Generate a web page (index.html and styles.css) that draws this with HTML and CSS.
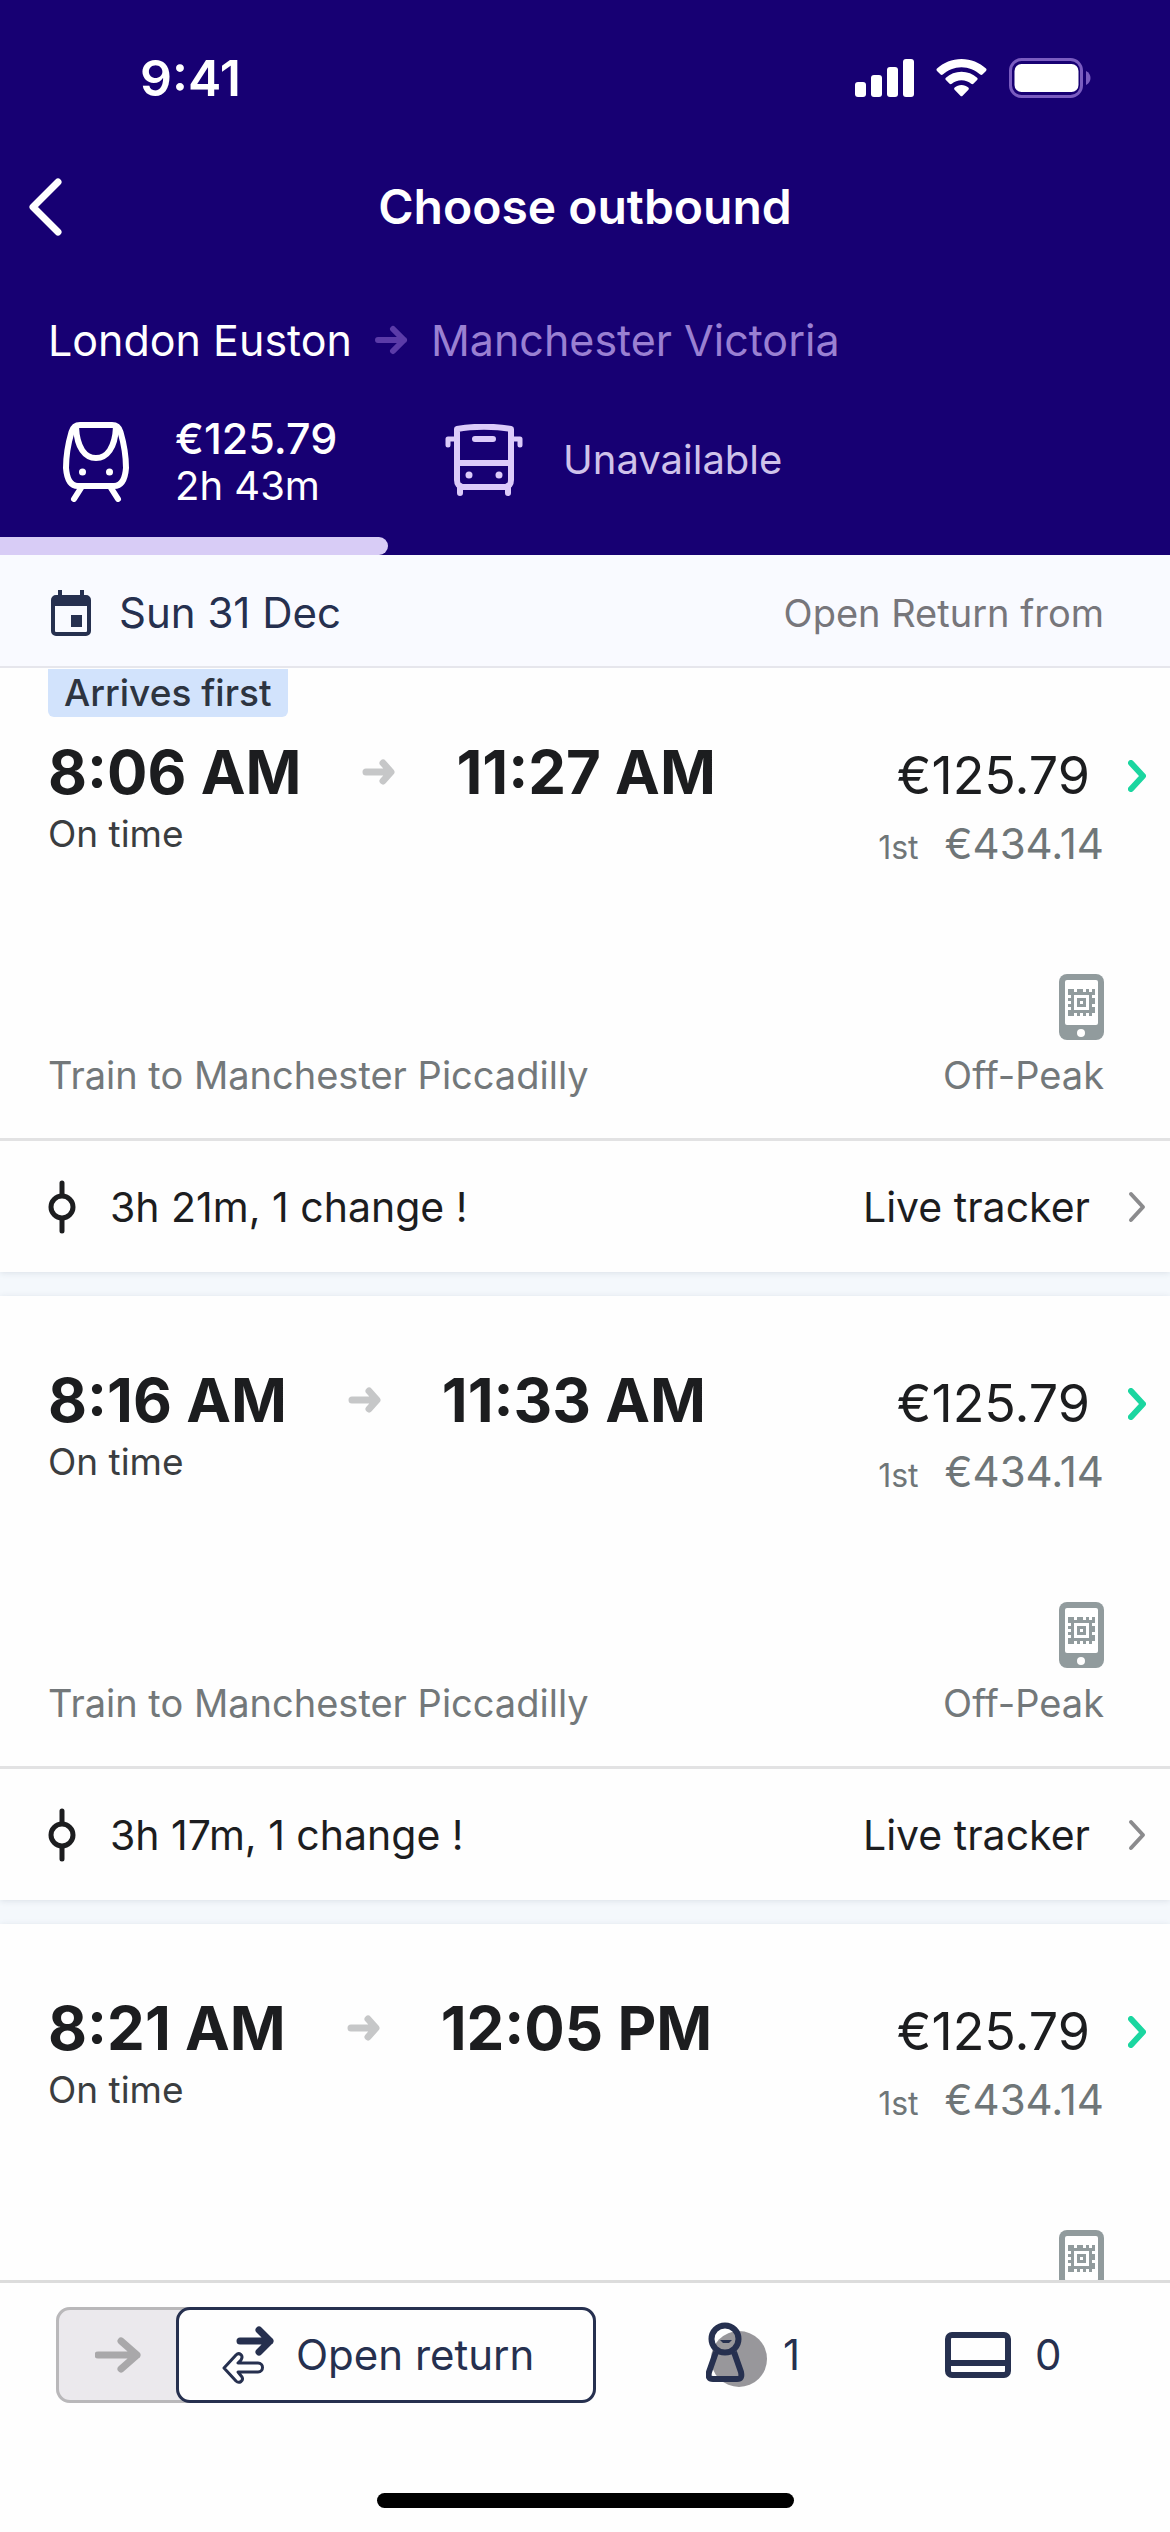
FILE: index.html
```
<!doctype html>
<html lang="en">
<head>
<meta charset="utf-8">
<meta name="viewport" content="width=device-width, initial-scale=1">
<title>Choose outbound</title>
<link rel="stylesheet" href="styles.css">
</head>
<body>

<!-- shared icons -->
<svg class="sprite" aria-hidden="true">
  <symbol id="arrow" viewBox="0 0 33 30">
    <path d="M3 15H29M18 4L29 15L18 26" fill="none" stroke="currentColor" stroke-width="6" stroke-linecap="round" stroke-linejoin="round"/>
  </symbol>
  <symbol id="arrow-bold" viewBox="0 0 33 26">
    <path d="M4 13H28M21 4L29 13L21 22" fill="none" stroke="currentColor" stroke-width="7" stroke-linecap="round" stroke-linejoin="round"/>
  </symbol>
  <symbol id="chevron" viewBox="0 0 18 32">
    <path d="M3 3L15 16L3 29" fill="none" stroke="currentColor" stroke-linecap="round" stroke-linejoin="round"/>
  </symbol>
  <symbol id="mticket" viewBox="0 0 45 66">
    <rect width="45" height="66" rx="8" fill="#919b9d"/>
    <rect x="6" y="6" width="33" height="45" rx="2" fill="#fff"/>
    <circle cx="22" cy="59" r="4" fill="#fff"/>
    <path d="M13.500 19.500h18v18h-18z" fill="none" stroke="#919b9d" stroke-width="3"/>
    <path d="M19.500 25.500h6v6h-6z" fill="none" stroke="#919b9d" stroke-width="3"/>
    <path d="M9 15h6v3h-6zM18 15h6v3h-6zM27 15h3v3h-3zM33 15h3v6h-3zM9 18h3v3h-3zM9 24h3v3h-3zM9 30h3v3h-3zM9 36h3v6h-3zM12 39h3v3h-3zM18 39h3v3h-3zM24 39h3v3h-3zM30 39h3v3h-3zM33 24h3v6h-3zM33 33h3v6h-3z" fill="#919b9d"/>
  </symbol>
  <symbol id="leg" viewBox="0 0 28 54">
    <g fill="none" stroke="#1c1d1f" stroke-width="5" stroke-linecap="round">
      <circle cx="14" cy="27" r="11"/>
      <path d="M14 3V15M14 39V51"/>
    </g>
  </symbol>
</svg>

<header class="header">
  <div class="status">
    <span class="clock">9:41</span>
    <div class="status-icons">
      <svg width="59" height="38" viewBox="0 0 59 38" fill="#fff">
        <rect x="0" y="23" width="11" height="15" rx="3"/>
        <rect x="16" y="16" width="11" height="22" rx="3"/>
        <rect x="32" y="8" width="11" height="30" rx="3"/>
        <rect x="48" y="0" width="11" height="38" rx="3"/>
      </svg>
      <svg width="51" height="38" viewBox="0 0 51 38" fill="#fff">
        <path d="M25.500 0C35 0 43.500 3.600 50 9.600c.7.700.7 1.600 0 2.300l-3.600 3.700c-.6.600-1.500.6-2.200 0C39.200 11 32.700 8.200 25.500 8.200S11.800 11 6.800 15.600c-.7.600-1.600.6-2.200 0L1 11.900c-.7-.7-.7-1.600 0-2.300C7.500 3.600 16 0 25.500 0z"/>
        <path d="M25.500 12.800c6 0 11.400 2.200 15.600 5.900.7.600.7 1.600 0 2.300l-3.700 3.700c-.6.600-1.500.6-2.200.1-2.600-2.200-6-3.600-9.700-3.600s-7.100 1.400-9.700 3.600c-.7.500-1.600.5-2.200-.1L9.900 21c-.7-.7-.7-1.700 0-2.300 4.200-3.700 9.600-5.900 15.600-5.900z"/>
        <path d="M25.500 26c2.600 0 4.900.9 6.800 2.500.7.600.7 1.500.1 2.200l-5.800 6c-.6.700-1.600.7-2.200 0l-5.800-6c-.6-.7-.6-1.600.1-2.200 1.900-1.600 4.200-2.500 6.800-2.500z"/>
      </svg>
      <svg width="82" height="40" viewBox="0 0 82 40">
        <rect x="1.500" y="1.500" width="71" height="37" rx="11" fill="none" stroke="#7a5cc0" stroke-width="3"/>
        <rect x="5.500" y="6" width="64" height="28" rx="7" fill="#fff"/>
        <path d="M77 13c6 3 6 11 0 14z" fill="#7a5cc0"/>
      </svg>
    </div>
  </div>

  <div class="nav">
    <button class="back" aria-label="Back">
      <svg width="34" height="58" viewBox="0 0 34 58"><path d="M30 4L5 29L30 54" fill="none" stroke="#fff" stroke-width="7" stroke-linecap="round" stroke-linejoin="round"/></svg>
    </button>
    <h1 class="title">Choose outbound</h1>
  </div>

  <div class="route">
    <span>London Euston</span>
    <svg class="route-arrow"><use href="#arrow"/></svg>
    <span class="dest">Manchester Victoria</span>
  </div>

  <div class="modes">
    <button class="mode mode-train">
      <svg width="66" height="80" viewBox="0 0 66 80" fill="none" stroke="#fff" stroke-width="6" stroke-linecap="round" stroke-linejoin="round">
        <path d="M17 3H49C54 3 56 5 57.500 10C61 22 63 34 63 46C62 59 58 64 51 64H15C8 64 4 59 3 46C3 34 5 22 8.500 10C10 5 12 3 17 3Z"/>
        <path d="M13 5C14 26 22 36 33 36S52 26 53 5"/>
        <path d="M18 66L11 77M48 66L55 77"/>
        <circle cx="19.500" cy="50" r="3.500" fill="#fff" stroke="none"/>
        <circle cx="46.500" cy="50" r="3.500" fill="#fff" stroke="none"/>
      </svg>
      <span class="mode-text"><b>€125.79</b>2h 43m</span>
    </button>
    <button class="mode mode-coach">
      <svg width="78" height="72" viewBox="0 0 78 72" fill="none" stroke="#dccbfa" stroke-width="6" stroke-linecap="round" stroke-linejoin="round">
        <path d="M12 5C28 2 50 2 66 5V56C66 60 64 63 60 63H18C14 63 12 60 12 56Z"/>
        <path d="M12 39H66M30 15H48M15 62V69M63 62V69"/>
        <path d="M11 15H3V21M67 15H75V21" stroke-width="5"/>
        <circle cx="24" cy="51" r="3.500" fill="#dccbfa" stroke="none"/>
        <circle cx="54" cy="51" r="3.500" fill="#dccbfa" stroke="none"/>
      </svg>
      <span class="mode-off">Unavailable</span>
    </button>
  </div>
  <div class="indicator"></div>
</header>

<div class="datebar">
  <svg width="40" height="46" viewBox="0 0 40 46" fill="none" stroke="#26304f">
    <rect x="2" y="7" width="36" height="37" rx="3" stroke-width="4"/>
    <path d="M2 7H38V16H2Z" fill="#26304f" stroke="none"/>
    <path d="M9 0V8M31 0V8" stroke-width="4"/>
    <path d="M20 25H31V37H20Z" fill="#26304f" stroke="none"/>
  </svg>
  <span class="date">Sun 31 Dec</span>
  <span class="return">Open Return from</span>
</div>

<main class="results">
  <article class="card">
    <a class="trip" href="#">
      <div class="flag"><span class="badge">Arrives first</span></div>
      <div class="summary">
        <div class="left">
          <div class="times"><span>8:06 AM</span><svg class="time-arrow"><use href="#arrow-bold"/></svg><span>11:27 AM</span></div>
          <div class="state">On time</div>
        </div>
        <div class="fares">
          <div class="price">€125.79<svg class="go"><use href="#chevron"/></svg></div>
          <div class="first"><small>1st</small>€434.14</div>
        </div>
      </div>
      <svg class="mticket"><use href="#mticket"/></svg>
      <div class="meta"><span>Train to Manchester Piccadilly</span><span>Off-Peak</span></div>
    </a>
    <a class="live" href="#">
      <svg class="leg"><use href="#leg"/></svg>
      <span class="duration">3h 21m, 1 change !</span>
      <span>Live tracker</span>
      <svg class="more"><use href="#chevron"/></svg>
    </a>
  </article>

  <article class="card">
    <a class="trip" href="#">
      <div class="flag"></div>
      <div class="summary">
        <div class="left">
          <div class="times"><span>8:16 AM</span><svg class="time-arrow"><use href="#arrow-bold"/></svg><span>11:33 AM</span></div>
          <div class="state">On time</div>
        </div>
        <div class="fares">
          <div class="price">€125.79<svg class="go"><use href="#chevron"/></svg></div>
          <div class="first"><small>1st</small>€434.14</div>
        </div>
      </div>
      <svg class="mticket"><use href="#mticket"/></svg>
      <div class="meta"><span>Train to Manchester Piccadilly</span><span>Off-Peak</span></div>
    </a>
    <a class="live" href="#">
      <svg class="leg"><use href="#leg"/></svg>
      <span class="duration">3h 17m, 1 change !</span>
      <span>Live tracker</span>
      <svg class="more"><use href="#chevron"/></svg>
    </a>
  </article>

  <article class="card">
    <a class="trip" href="#">
      <div class="flag"></div>
      <div class="summary">
        <div class="left">
          <div class="times"><span>8:21 AM</span><svg class="time-arrow"><use href="#arrow-bold"/></svg><span>12:05 PM</span></div>
          <div class="state">On time</div>
        </div>
        <div class="fares">
          <div class="price">€125.79<svg class="go"><use href="#chevron"/></svg></div>
          <div class="first"><small>1st</small>€434.14</div>
        </div>
      </div>
      <svg class="mticket"><use href="#mticket"/></svg>
    </a>
  </article>
</main>

<footer class="footer">
  <div class="options">
    <div class="toggle">
      <button class="single" aria-label="Single">
        <svg width="46" height="36" viewBox="0 0 46 36"><path d="M3 18H42M26 4L42 18L26 32" fill="none" stroke="#a9a8aa" stroke-width="7" stroke-linecap="round" stroke-linejoin="round"/></svg>
      </button>
      <button class="open">
        <svg width="54" height="58" viewBox="0 0 54 58" fill="none" stroke="#26304f" stroke-linecap="round" stroke-linejoin="round">
          <path d="M18 15H48M37 4L48 15L37 26" stroke-width="7"/>
          <path d="M2 42L14 29C17 26 22 29 19 34L16 37H36C42 37 42 46 36 46H16L20 51C22 55 17 58 14 55Z" stroke-width="3"/>
        </svg>
        Open return
      </button>
    </div>
    <button class="count">
      <svg width="61" height="66" viewBox="0 0 61 66">
        <circle cx="33" cy="37" r="28" fill="#98979b"/>
        <path d="M14 18H26L23 21H17Z" fill="#26304f"/>
        <g fill="none" stroke="#26304f" stroke-width="6" stroke-linejoin="round">
          <circle cx="19" cy="17" r="13.500"/>
          <path d="M10 30L3 50C2 55 3 57 7 57H31C35 57 36 55 35 50L28 30"/>
        </g>
      </svg>
      <span>1</span>
    </button>
    <button class="count railcards">
      <svg width="66" height="46" viewBox="0 0 66 46" fill="none" stroke="#26304f" stroke-width="6">
        <rect x="3" y="3" width="60" height="40" rx="4"/>
        <path d="M3 31H63"/>
      </svg>
      <span>0</span>
    </button>
  </div>
  <div class="home"></div>
</footer>

</body>
</html>
```

FILE: styles.css
```
* { box-sizing:border-box; }

body {
  display:flex;
  flex-direction:column;
  height:100vh;
  margin:0;
  overflow:hidden;
  background:#f4f8fc;
  color:#1c1d1f;
  font:40px/48px Inter, "Liberation Sans", sans-serif;
}

button {
  padding:0;
  border:0;
  background:none;
  color:inherit;
  font:inherit;
}

a { color:inherit; text-decoration:none; }
svg { display:block; flex:none; }

.sprite { position:absolute; width:0; height:0; }

/* header */
.header { flex:none; background:#170073; color:#fff; }

.status {
  display:flex;
  align-items:center;
  justify-content:space-between;
  height:156px;
  padding:0 79px 0 140px;
}

.clock { font-size:50px; font-weight:600; }
.status-icons { display:flex; align-items:center; gap:22px; }

.nav {
  display:grid;
  grid-template-columns:100px 1fr 100px;
  align-items:center;
  height:102px;
}

.back { padding-left:28px; }

.title {
  margin:0;
  font-size:48px;
  font-weight:600;
  text-align:center;
}

.route {
  display:flex;
  align-items:center;
  gap:23px;
  padding:54px 48px 46px;
  font-size:43px;
  line-height:56px;
}

.route-arrow { width:33px; height:30px; color:#5b3ba8; }
.dest { color:#9a80d2; }

.modes { display:flex; padding-bottom:27px; }

.mode {
  display:flex;
  align-items:center;
  text-align:left;
}

.mode-train { width:388px; gap:46px; padding-left:63px; }
.mode-coach { gap:40px; padding:0 0 4px 57px; }
.mode-text b { display:block; font-size:43px; font-weight:500; }
.mode-off { color:#cfc3ea; }

.indicator {
  width:388px;
  height:18px;
  border-radius:0 9px 9px 0;
  background:#d8ccf6;
}

.datebar {
  display:flex;
  flex:none;
  align-items:center;
  height:113px;
  padding:4px 66px 0 51px;
  border-bottom:2px solid #e6e6ec;
  background:#f9faff;
}

.date {
  flex:1;
  padding-left:28px;
  color:#26304f;
  font-size:42px;
}

.return { color:#77767b; font-size:38px; }

/* results */
.results { flex:1; min-height:0; overflow:hidden; }

.card {
  margin-bottom:24px;
  background:#fefefe;
  box-shadow:0 1px 6px rgba(40,60,80,.12);
}

.trip {
  display:block;
  padding:0 66px 39px 48px;
  border-bottom:3px solid #e2e2e3;
}

.flag { height:48px; margin-bottom:24px; }

.badge {
  display:inline-block;
  padding:0 16px;
  border-radius:0 0 6px 6px;
  background:#d2e3fc;
  color:#2d3440;
  font-size:37px;
  font-weight:500;
}

.summary {
  display:flex;
  align-items:baseline;
  justify-content:space-between;
  height:234px;
}

.times {
  display:flex;
  align-items:center;
  gap:61px;
  font-size:60px;
  font-weight:700;
  line-height:64px;
}

.time-arrow { width:33px; height:26px; color:#c6c7c8; }

.state {
  margin-top:8px;
  color:#3a3d40;
  font-size:37px;
  line-height:44px;
}

.price {
  display:flex;
  align-items:center;
  justify-content:flex-end;
  gap:38px;
  margin-right:-42px;
  font-size:52px;
  line-height:64px;
}

.go { width:18px; height:32px; color:#1bd6a0; stroke-width:6; }

.first {
  margin-top:12px;
  color:#6f7678;
  font-size:42px;
  text-align:right;
}

.first small { margin-right:26px; font-size:32px; }

.mticket { width:45px; height:66px; margin-left:auto; }

.meta {
  display:flex;
  justify-content:space-between;
  margin-top:11px;
  color:#73787a;
  font-size:38px;
}

.live {
  display:flex;
  align-items:center;
  height:131px;
  padding:0 24px 0 48px;
  font-size:41px;
}

.leg { width:28px; height:54px; }
.duration { flex:1; padding-left:34px; }
.more { width:18px; height:32px; margin-left:38px; color:#8b8b8d; stroke-width:4; }

/* bottom bar */
.footer {
  display:flex;
  flex:none;
  flex-direction:column;
  align-items:center;
  gap:90px;
  padding:24px 56px;
  border-top:3px solid #dcdcdc;
  background:#fefefe;
}

.options {
  display:flex;
  align-items:center;
  width:100%;
  color:#26304f;
  font-size:42px;
}

.toggle {
  display:flex;
  width:540px;
  height:96px;
  margin-right:110px;
  border-radius:14px;
  background:#ebe9ed;
}

.single {
  display:flex;
  align-items:center;
  width:140px;
  margin-right:-20px;
  padding-left:36px;
  border:3px solid #b9b8ba;
  border-radius:14px 0 0 14px;
}

.open {
  display:flex;
  flex:1;
  align-items:center;
  gap:20px;
  padding-left:43px;
  border:3px solid #26304f;
  border-radius:14px;
  background:#fefefe;
}

.count { display:flex; align-items:center; gap:16px; }
.railcards { gap:24px; margin-left:145px; }

.home {
  width:417px;
  height:15px;
  border-radius:8px;
  background:#000;
}
```
